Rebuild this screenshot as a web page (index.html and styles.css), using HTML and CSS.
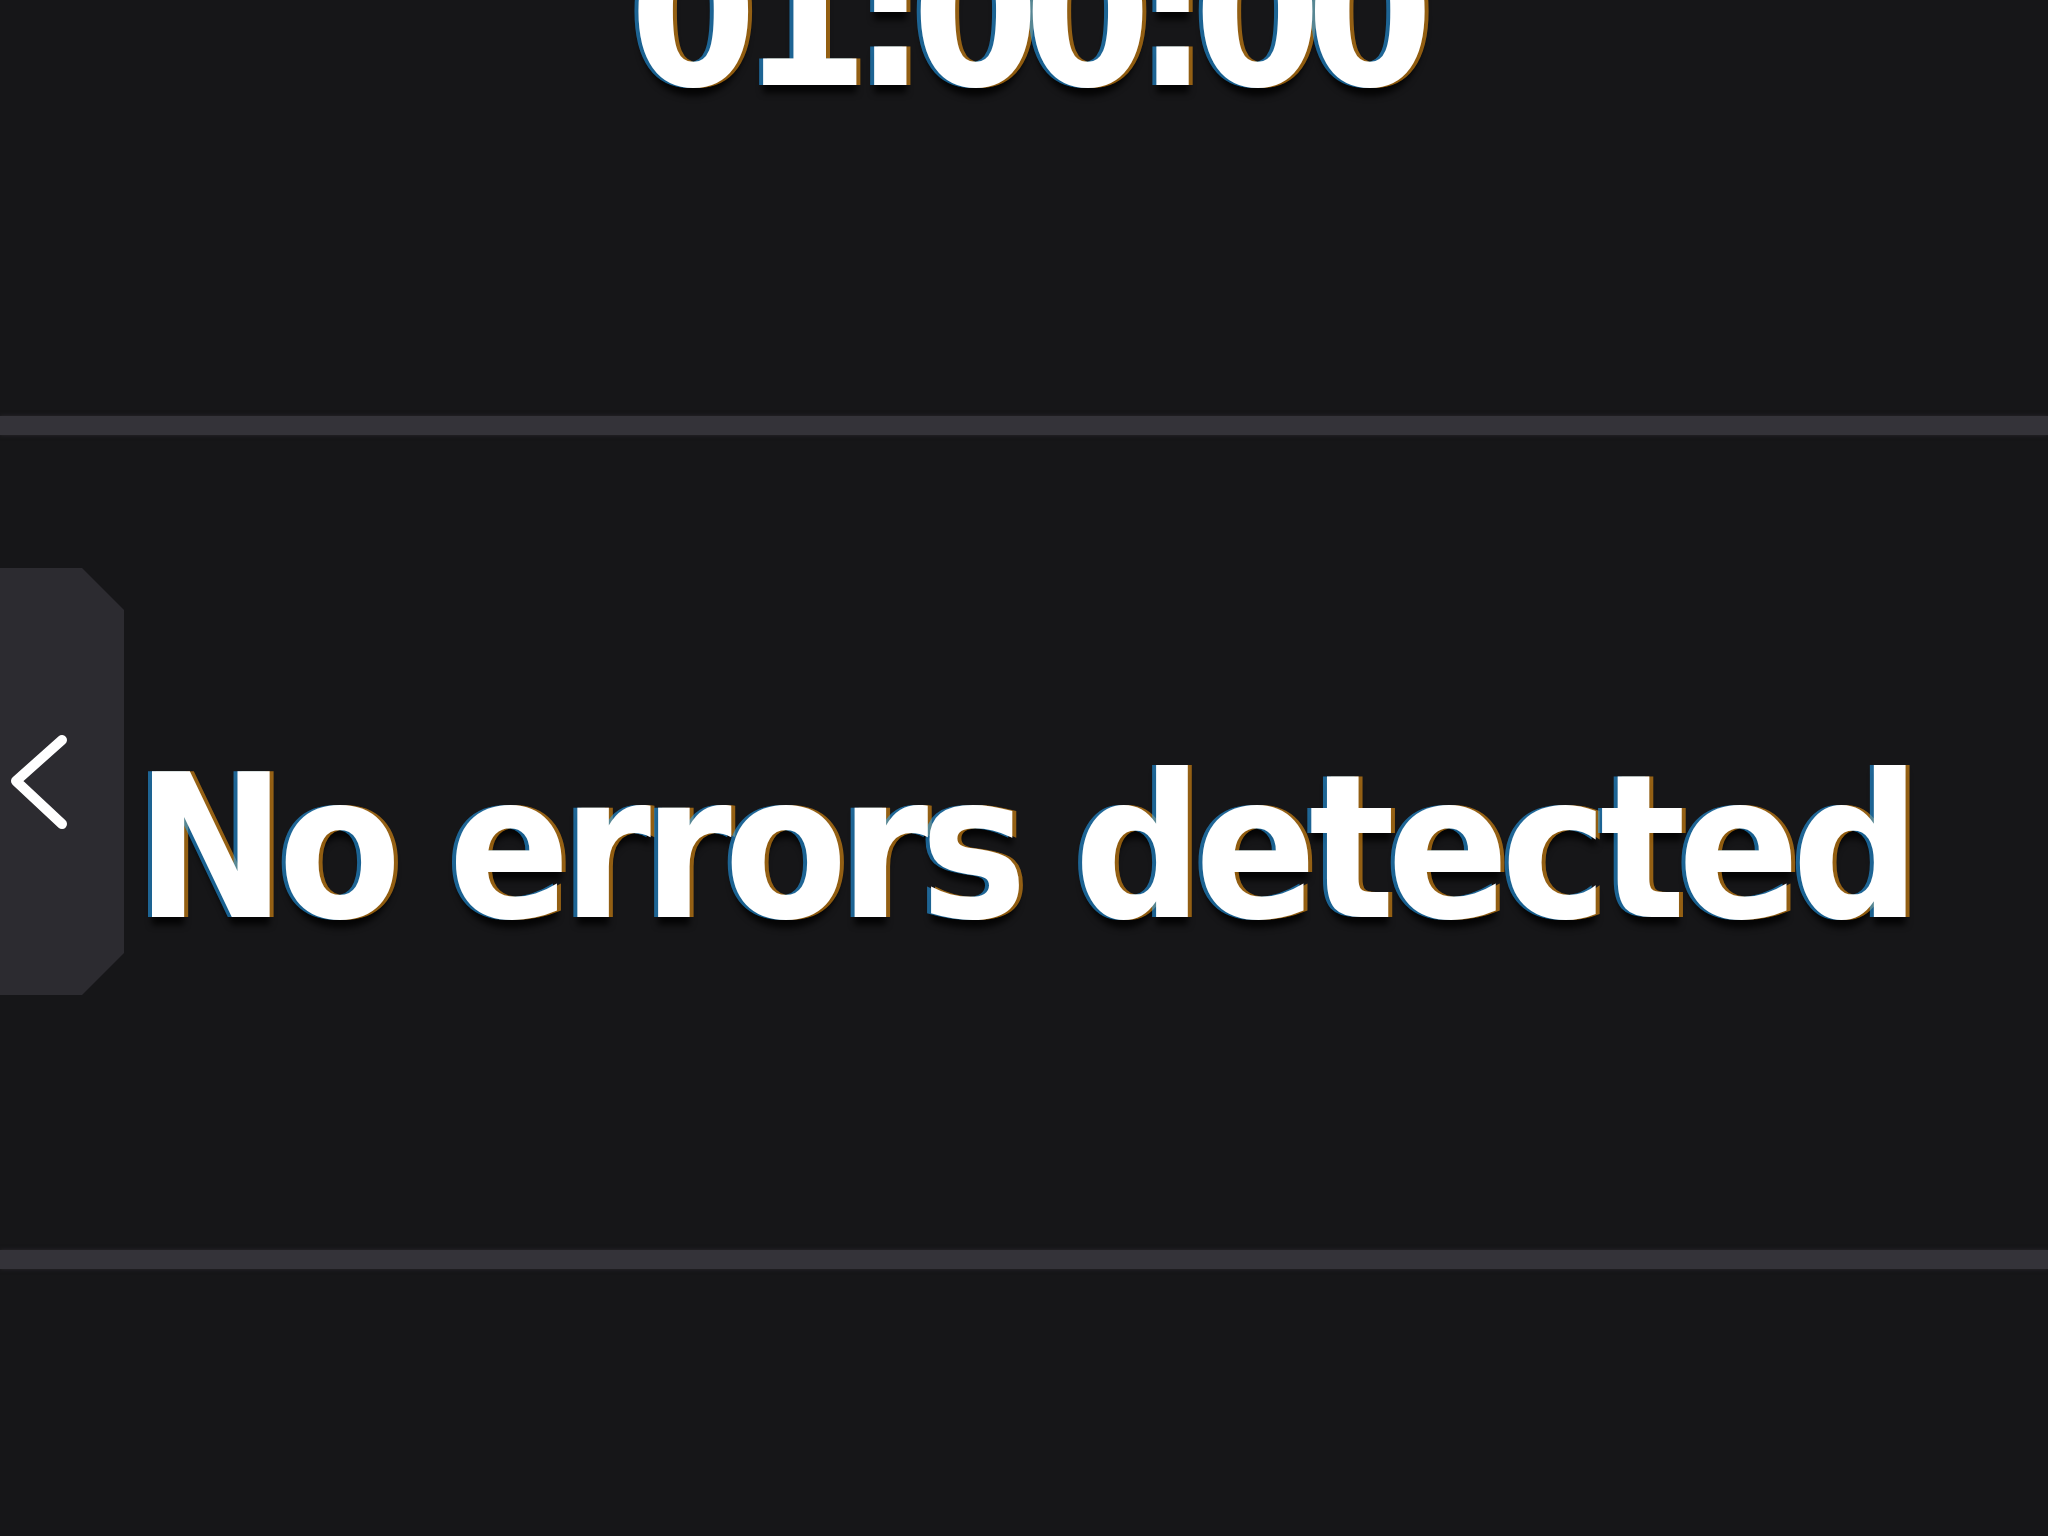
FILE: index.html
```html
<!DOCTYPE html>
<html lang="en">
<head>
<meta charset="utf-8">
<title>Status</title>
<link rel="stylesheet" href="styles.css">
</head>
<body>
<main class="screen">
  <section class="clock">
    <div class="time">01:00:00</div>
  </section>
  <hr class="divider">
  <section class="status">
    <button class="drawer-tab" aria-label="Open panel">
      <svg class="chevron" viewBox="0 0 60 100" width="60" height="100" aria-hidden="true">
        <path d="M54 8 L8 49 L54 92" fill="none" stroke="#ffffff" stroke-width="10" stroke-linecap="round" stroke-linejoin="round"/>
      </svg>
    </button>
    <p class="message">No errors detected</p>
  </section>
  <hr class="divider">
  <section class="footer"></section>
</main>
</body>
</html>
```

FILE: styles.css
```css
html, body {
  margin: 0;
  padding: 0;
  background: #161618;
  overflow: hidden;
}

.screen {
  width: 2048px;
  height: 1536px;
  display: flex;
  flex-direction: column;
  font-family: "DejaVu Sans Condensed", "DejaVu Sans", sans-serif;
  font-weight: bold;
  color: #ffffff;
  position: relative;
}

.clock {
  height: 416px;
  display: flex;
  justify-content: center;
  overflow: hidden;
}

.time {
  font-size: 203px;
  line-height: 1;
  margin-top: -86px;
  letter-spacing: -15px;
  text-shadow: -4px 0 0 rgba(40, 170, 255, 0.55), 4px 0 0 rgba(255, 160, 20, 0.55), 0 8px 6px rgba(0, 0, 0, 0.8);
}

.divider {
  margin: 0;
  border: 0;
  height: 19px;
  background: #343339;
  box-shadow: 0 0 4px #2a292e;
}

.status {
  height: 815px;
  display: flex;
  align-items: center;
  justify-content: center;
}

.message {
  margin: 10px 0 0 0;
  font-size: 200px;
  line-height: 1;
  letter-spacing: -8px;
  text-shadow: -4px 0 0 rgba(40, 170, 255, 0.55), 4px 0 0 rgba(255, 160, 20, 0.55), 0 8px 6px rgba(0, 0, 0, 0.8);
}

.drawer-tab {
  position: absolute;
  left: 0;
  top: 568px;
  width: 124px;
  height: 427px;
  margin: 0;
  padding: 0 0 0 8px;
  border: 0;
  background: #2c2b30;
  clip-path: polygon(0 0, calc(100% - 42px) 0, 100% 42px, 100% calc(100% - 42px), calc(100% - 42px) 100%, 0 100%);
  display: flex;
  align-items: center;
  justify-content: flex-start;
}

.chevron {
  display: block;
}

.footer {
  flex: 1;
}
```
